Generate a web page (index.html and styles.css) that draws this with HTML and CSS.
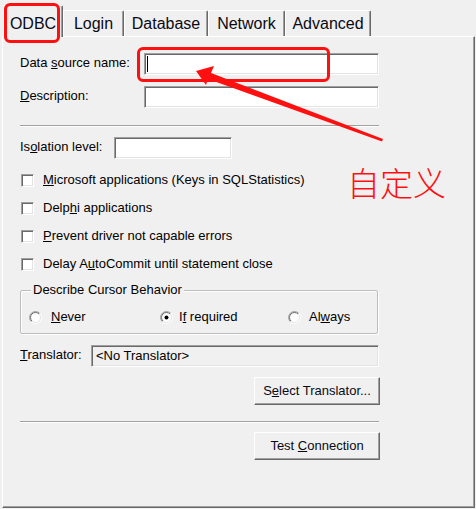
FILE: index.html
```html
<!DOCTYPE html>
<html>
<head>
<meta charset="utf-8">
<link rel="stylesheet" href="styles.css">
</head>
<body>
<div class="dialog">
  <div class="tabs">
    <div class="tab active w-odbc">ODBC</div>
    <div class="tab w-login">Login</div>
    <div class="tab w-db">Database</div>
    <div class="tab w-net">Network</div>
    <div class="tab w-adv">Advanced</div>
  </div>
  <div class="panel">
    <div class="row r-dsn">
      <span class="lbl lbl-wide">Data <u>s</u>ource name:</span>
      <div class="field fld-long"><span class="caret"></span></div>
    </div>
    <div class="row r-desc">
      <span class="lbl lbl-wide"><u>D</u>escription:</span>
      <div class="field fld-long"></div>
    </div>
    <div class="sep sep-1"></div>
    <div class="row r-iso">
      <span class="lbl lbl-iso">Is<u>o</u>lation level:</span>
      <div class="field fld-iso"></div>
    </div>
    <div class="checks">
      <div class="check"><span class="box"></span><span><u>M</u>icrosoft applications (Keys in SQLStatistics)</span></div>
      <div class="check"><span class="box"></span><span>Delp<u>h</u>i applications</span></div>
      <div class="check"><span class="box"></span><span><u>P</u>revent driver not capable errors</span></div>
      <div class="check"><span class="box"></span><span>Delay A<u>u</u>toCommit until statement close</span></div>
    </div>
    <div class="group">
      <span class="legend">Describe Cursor Behavior</span>
      <div class="radios">
        <div class="radio r-never">
          <svg class="rad" width="13" height="13" viewBox="0 0 13 13"><defs><linearGradient id="go1" x1="0" y1="0" x2="1" y2="1"><stop offset="0.48" stop-color="#a0a0a0"/><stop offset="0.52" stop-color="#ffffff"/></linearGradient><linearGradient id="gi1" x1="0" y1="0" x2="1" y2="1"><stop offset="0.48" stop-color="#696969"/><stop offset="0.52" stop-color="#e3e3e3"/></linearGradient></defs><circle cx="6.5" cy="6.5" r="6" fill="none" stroke="url(#go1)"/><circle cx="6.5" cy="6.5" r="5" fill="#fff" stroke="url(#gi1)"/></svg>
          <span><u>N</u>ever</span>
        </div>
        <div class="radio r-ifreq">
          <svg class="rad" width="13" height="13" viewBox="0 0 13 13"><defs><linearGradient id="go2" x1="0" y1="0" x2="1" y2="1"><stop offset="0.48" stop-color="#a0a0a0"/><stop offset="0.52" stop-color="#ffffff"/></linearGradient><linearGradient id="gi2" x1="0" y1="0" x2="1" y2="1"><stop offset="0.48" stop-color="#696969"/><stop offset="0.52" stop-color="#e3e3e3"/></linearGradient></defs><circle cx="6.5" cy="6.5" r="6" fill="none" stroke="url(#go2)"/><circle cx="6.5" cy="6.5" r="5" fill="#fff" stroke="url(#gi2)"/><circle cx="6.5" cy="6.5" r="2" fill="#000"/></svg>
          <span>I<u>f</u> required</span>
        </div>
        <div class="radio r-always">
          <svg class="rad" width="13" height="13" viewBox="0 0 13 13"><defs><linearGradient id="go3" x1="0" y1="0" x2="1" y2="1"><stop offset="0.48" stop-color="#a0a0a0"/><stop offset="0.52" stop-color="#ffffff"/></linearGradient><linearGradient id="gi3" x1="0" y1="0" x2="1" y2="1"><stop offset="0.48" stop-color="#696969"/><stop offset="0.52" stop-color="#e3e3e3"/></linearGradient></defs><circle cx="6.5" cy="6.5" r="6" fill="none" stroke="url(#go3)"/><circle cx="6.5" cy="6.5" r="5" fill="#fff" stroke="url(#gi3)"/></svg>
          <span>Al<u>w</u>ays</span>
        </div>
      </div>
    </div>
    <div class="row r-trans">
      <span class="lbl lbl-trans"><u>T</u>ranslator:</span>
      <div class="field fld-trans disabled">&lt;No Translator&gt;</div>
    </div>
    <div class="btn btn-sel">S<u>e</u>lect Translator...</div>
    <div class="sep sep-2"></div>
    <div class="btn btn-test">Test <u>C</u>onnection</div>
  </div>
</div>

<svg class="annot" width="476" height="509" viewBox="0 0 476 509">
  <rect x="5.5" y="4.5" width="53" height="37" rx="4.5" fill="none" stroke="#fe1010" stroke-width="3"/>
  <rect x="138.5" y="48.5" width="190" height="32" rx="4.5" fill="none" stroke="#fe1010" stroke-width="3"/>
  <polygon points="196,71 214,66 211,73 383,139 382,141.5 208,79 206,85" fill="#fe1010"/>
</svg>
<div class="note">自定义</div>
</body>
</html>
```
FILE: styles.css
```css
html, body {
  margin: 0;
  padding: 0;
  background: #f0f0f0;
}
body {
  width: 476px;
  height: 509px;
  overflow: hidden;
  position: relative;
  font-family: "Liberation Sans", Arial, sans-serif;
  font-size: 13px;
  color: #000;
}
.dialog {
  padding-top: 5px;
  padding-left: 2px;
}
.tabs {
  display: flex;
  align-items: flex-end;
  height: 32px;
  padding-left: 1px;
  margin-bottom: -1px;
  position: relative;
  z-index: 1;
}
.tab {
  box-sizing: border-box;
  height: 26px;
  margin-bottom: 1px;
  border-top: 1px solid #ffffff;
  border-left: 1px solid #ffffff;
  border-right: 1px solid #696969;
  box-shadow: inset -1px 0 0 #a0a0a0;
  border-top-right-radius: 2px;
  background: #f0f0f0;
  font-size: 16px;
  line-height: 26px;
  text-align: center;
  color: #0a0a14;
}
.tab.active {
  height: 32px;
  margin-bottom: 0;
  line-height: 35px;
}
.w-odbc { width: 60px; }
.w-login { width: 61px; }
.w-db { width: 84px; }
.w-net { width: 77px; }
.w-adv { width: 86px; }

.panel {
  box-sizing: border-box;
  width: 473px;
  height: 472px;
  border-top: 1px solid #ffffff;
  border-left: 1px solid #ffffff;
  border-right: 1px solid #696969;
  border-bottom: 1px solid #696969;
  box-shadow: inset -1px -1px 0 #a0a0a0;
  padding: 16px 0 0 17px;
}
.row {
  display: flex;
  align-items: center;
  height: 22px;
}
.r-desc { margin-top: 11px; }
.r-iso { margin-top: 10px; }
.r-trans { margin-top: 11px; }
.lbl {
  flex: none;
  line-height: 16px;
  margin-top: -3px;
}
.lbl-wide { width: 124px; }
.lbl-iso { width: 94px; }
.lbl-trans { width: 71px; }
.field {
  box-sizing: border-box;
  height: 22px;
  background: #ffffff;
  border-top: 1px solid #a0a0a0;
  border-left: 1px solid #a0a0a0;
  border-right: 1px solid #ffffff;
  border-bottom: 1px solid #ffffff;
  box-shadow: inset 1px 1px 0 #696969, inset -1px -1px 0 #e3e3e3;
  display: flex;
  align-items: center;
}
.fld-long { width: 235px; }
.fld-iso { width: 118px; }
.fld-trans {
  width: 288px;
  padding-left: 4px;
  line-height: 16px;
}
.field.disabled { background: #f0f0f0; }
.caret {
  display: block;
  width: 1px;
  height: 16px;
  margin-left: 2px;
  background: #000;
}
.sep {
  width: 359px;
  height: 0;
  border-top: 1px solid #a0a0a0;
  border-bottom: 1px solid #ffffff;
}
.sep-1 { margin-top: 17px; }
.sep-2 { margin-top: 16px; }
.checks {
  margin-top: 7px;
}
.check {
  display: flex;
  align-items: center;
  height: 28px;
  line-height: 16px;
}
.box {
  box-sizing: border-box;
  flex: none;
  width: 13px;
  height: 13px;
  margin-left: 1px;
  margin-right: 9px;
  background: #ffffff;
  border-top: 1px solid #a0a0a0;
  border-left: 1px solid #a0a0a0;
  border-right: 1px solid #ffffff;
  border-bottom: 1px solid #ffffff;
  box-shadow: inset 1px 1px 0 #696969, inset -1px -1px 0 #e3e3e3;
}
.group {
  box-sizing: border-box;
  width: 358px;
  margin-top: 12px;
  border: 1px solid #bcbcbc;
  box-shadow: inset 1px 1px 0 #ffffff, 1px 1px 0 #ffffff;
  border-radius: 2px;
  padding: 0 0 6px 8px;
}
.legend {
  display: block;
  width: fit-content;
  margin-top: -9px;
  margin-left: 2px;
  padding: 0 2px;
  background: #f0f0f0;
  line-height: 16px;
}
.radios {
  display: flex;
  align-items: center;
  height: 20px;
  margin-top: 9px;
}
.radio {
  display: flex;
  align-items: center;
  line-height: 16px;
}
.rad {
  flex: none;
  margin-right: 9px;
}
.r-never { width: 131px; }
.r-ifreq { width: 128px; }
.r-ifreq .rad { margin-right: 6px; }
.r-always .rad { margin-right: 8px; }
.btn {
  box-sizing: border-box;
  width: 126px;
  height: 28px;
  margin-left: 234px;
  border-top: 1px solid #ffffff;
  border-left: 1px solid #ffffff;
  border-right: 1px solid #696969;
  border-bottom: 1px solid #696969;
  box-shadow: inset -1px -1px 0 #a0a0a0;
  background: #f0f0f0;
  text-align: center;
  line-height: 25px;
  color: #0a0a14;
}
.btn-sel { margin-top: 10px; }
.btn-test { margin-top: 9px; }

.annot {
  position: absolute;
  left: 0;
  top: 0;
  pointer-events: none;
  z-index: 5;
}
.note {
  position: absolute;
  left: 347px;
  top: 166px;
  font-family: "Noto Sans CJK SC", "Noto Sans", sans-serif;
  font-size: 33px;
  line-height: 33px;
  font-weight: 300;
  color: #fe1010;
  z-index: 5;
}
```
